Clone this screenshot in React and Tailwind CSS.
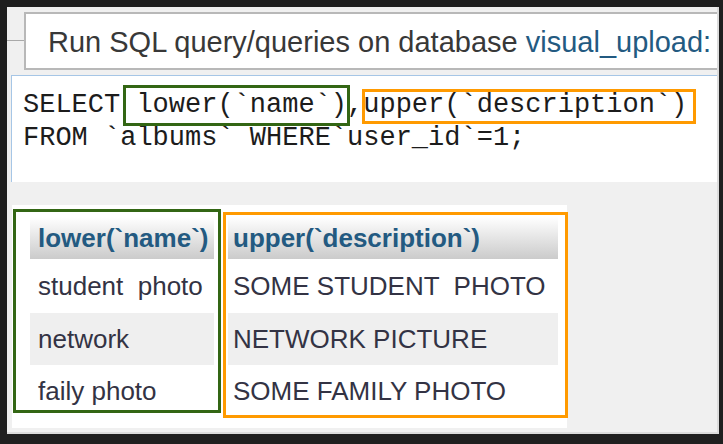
import React from "react";

const names = ["student  photo", "network", "faily photo"];
const descs = ["SOME STUDENT  PHOTO", "NETWORK PICTURE", "SOME FAMILY PHOTO"];
const rowH = ["h-[54px]", "h-[52px]", "h-[52px]"];

const Column = ({ title, items, width, pad, box }) => {
  return (
    <div className={`relative flex flex-col ${width}`}>
      <div className={`h-[42px] flex items-center ${pad} bg-gradient-to-b from-[#ffffff] to-[#cbcbcb] font-bold text-[#235a81] whitespace-pre`}>
        {title}
      </div>
      {items.map((t, i) => (
        <div
          key={i}
          className={`${rowH[i]} flex items-center ${pad} whitespace-pre ${i === 1 ? "bg-[#efefef]" : "bg-white"}`}
        >
          {t}
        </div>
      ))}
      <div className={`absolute border-[3px] ${box}`} />
    </div>
  );
};

export default function App() {
  return (
    <div className="w-[723px] h-[444px] bg-[#1f1f1f] pl-[7px] pt-[7px] pr-[4px] pb-[10px] font-['Liberation_Sans',Arial,sans-serif]">
      <div className="h-full bg-[#f0f0f0] border-r-2 border-b-2 border-[#dcdcdc] flex flex-col overflow-hidden">
        {/* legend */}
        <div className="flex items-start pt-[5px]">
          <div className="w-[17px] mt-[28px] border-t border-[#a9a9a9]" />
          <div className="flex-1 h-[58px] bg-white border-2 border-r-0 border-[#b8b8b8] pl-[22px] pt-[11px] text-[29px] leading-[34px] whitespace-nowrap text-[#383838]">
            Run SQL query/queries on database{" "}
            <span className="text-[#235a81]">visual_upload:</span>
          </div>
        </div>

        {/* query box */}
        <div className="ml-[4px] mt-[5px] h-[107px] bg-white border-t border-l border-[#a6c6e6] pl-[11px] pt-[13px] font-['Liberation_Mono','Courier_New',monospace] text-[27px] leading-[33px] text-[#1c1c1c] whitespace-pre">
          <div>
            SELECT{" "}
            <span className="relative">
              lower(`name`)
              <span className="absolute -left-[13px] -right-[3px] -top-[5px] -bottom-[6px] border-[3px] border-[#336614]" />
            </span>
            ,
            <span className="relative">
              upper(`description`)
              <span className="absolute -left-[1px] -right-[9px] -top-[1px] -bottom-[4px] border-[3px] border-[#ff9a00]" />
            </span>
          </div>
          <div>FROM `albums` WHERE`user_id`=1;</div>
        </div>

        {/* results */}
        <div className="ml-[5px] mt-[23px] w-[555px] h-[223px] bg-white pl-[18px] pt-[12px] text-[26px] text-[#333344]">
          <div className="flex gap-[14px]">
            <Column
              title="lower(`name`)"
              items={names}
              width="w-[184px]"
              pad="pl-2"
              box="-left-[17px] -right-[7px] -top-[8px] bottom-[4px] border-[#336614]"
            />
            <Column
              title="upper(`description`)"
              items={descs}
              width="w-[330px]"
              pad="pl-[5px]"
              box="-left-[5px] -right-[10px] -top-[5px] -bottom-[1px] border-[#ff9a00]"
            />
          </div>
        </div>
      </div>
    </div>
  );
}
